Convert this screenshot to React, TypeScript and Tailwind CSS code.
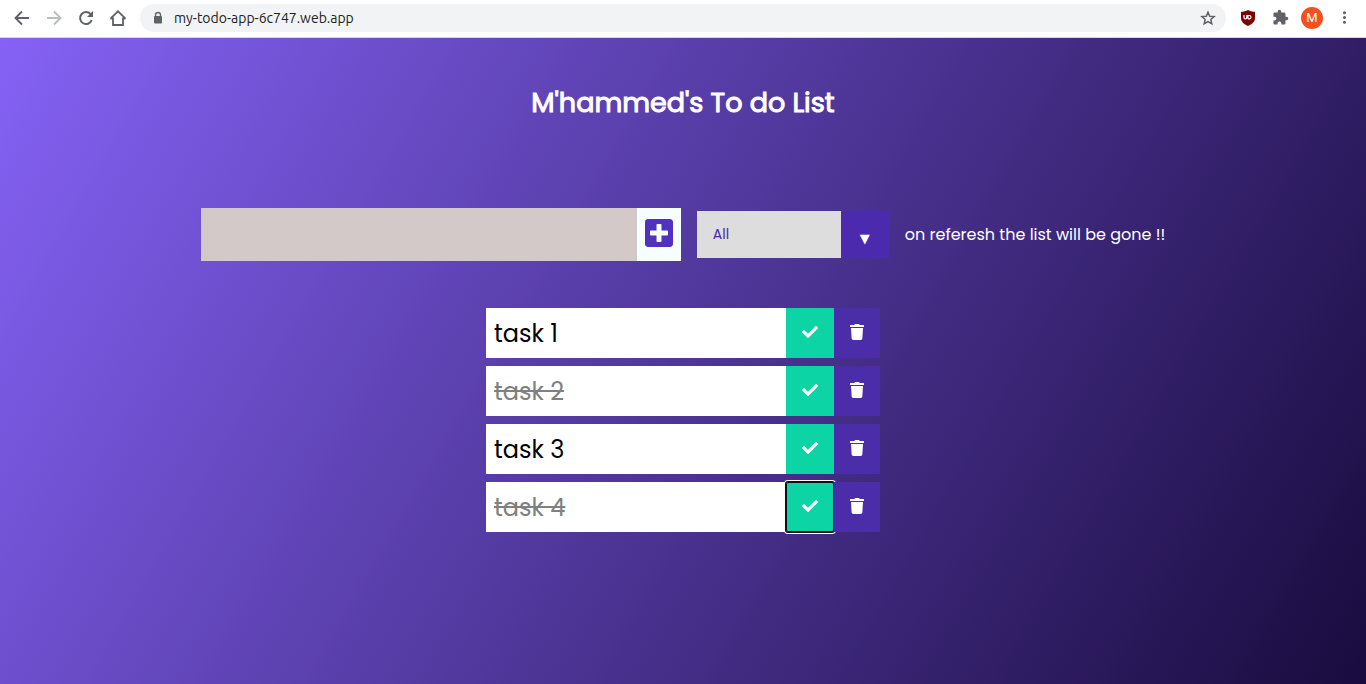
import { useState } from "react";
import type { FormEvent } from "react";
import { FaCheck, FaPlusSquare, FaTrash } from "react-icons/fa";
import { MdMoreVert } from "react-icons/md";

type Task = { id: number; text: string; done: boolean };

const initialTasks: Task[] = [
  { id: 1, text: "task 1", done: false },
  { id: 2, text: "task 2", done: true },
  { id: 3, text: "task 3", done: false },
  { id: 4, text: "task 4", done: true },
];

function ArrowIcon({ forward = false }: { forward?: boolean }) {
  return (
    <svg viewBox="0 0 20 20" className="size-5" fill="none" stroke="currentColor" strokeWidth="1.900" aria-hidden="true">
      <path d={forward ? "M3 10h13M10 3.500l6.500 6.500-6.500 6.500" : "M17 10H4M10 3.500 3.500 10l6.500 6.500"} />
    </svg>
  );
}

function ReloadIcon() {
  return (
    <svg viewBox="0 0 20 20" className="size-5" aria-hidden="true">
      <path d="M15.700 12.200A6 6 0 1 1 14.600 6.100" fill="none" stroke="currentColor" strokeWidth="2" />
      <path d="M17 3v6h-6Z" fill="currentColor" />
    </svg>
  );
}

function HomeIcon() {
  return (
    <svg viewBox="0 0 20 20" className="size-5" fill="none" stroke="currentColor" strokeWidth="1.800" aria-hidden="true">
      <path d="M2.500 10.700 10 3.300l7.500 7.400M2.500 10.500H5V17h10v-6.500h2.500" />
    </svg>
  );
}

function LockIcon() {
  return (
    <svg viewBox="0 0 12 14" className="h-3.5 w-3" aria-hidden="true">
      <path d="M3.500 6V4a2.500 2.500 0 0 1 5 0v2" fill="none" stroke="currentColor" strokeWidth="1.300" />
      <rect x="2" y="5" width="8" height="7.500" rx="1" fill="currentColor" />
    </svg>
  );
}

function StarIcon() {
  return (
    <svg viewBox="0 0 16 16" className="size-4" fill="none" stroke="currentColor" strokeWidth="1.500" aria-hidden="true">
      <path d="m8 2.200 1.700 4 4.400.4-3.300 2.900 1 4.200L8 11.500l-3.800 2.200 1-4.200-3.300-2.900 4.400-.4Z" />
    </svg>
  );
}

function PuzzleIcon() {
  return (
    <svg viewBox="0 0 24 24" className="size-[17px]" fill="currentColor" aria-hidden="true">
      <path d="M20.500 11H19V7c0-1.100-.9-2-2-2h-4V3.500a2.500 2.500 0 0 0-5 0V5H4c-1.100 0-2 .9-2 2v3.800h1.500a2.700 2.700 0 0 1 0 5.400H2V20c0 1.100.9 2 2 2h3.800v-1.500a2.700 2.700 0 0 1 5.400 0V22H17c1.100 0 2-.9 2-2v-4h1.500a2.500 2.500 0 0 0 0-5Z" />
    </svg>
  );
}

function ShieldIcon() {
  return (
    <svg viewBox="0 0 16 16" className="size-4" aria-hidden="true">
      <path d="M8 0c2 1.300 4.500 1.700 7 1.800V8c0 4-3 6.300-7 8-4-1.700-7-4-7-8V1.800C3.500 1.700 6 1.300 8 0Z" fill="#800000" />
      <path d="M4 5v2.400a1.400 1.400 0 0 0 2.800 0V5M8 5v3.900M8 5.500h1.700a1.700 1.700 0 0 1 0 3.300H8" fill="none" stroke="#fff" strokeWidth="1.200" />
    </svg>
  );
}

function BrowserBar() {
  return (
    <header className="flex h-[38px] items-center border-b border-[#d5d7db] bg-white px-3 pb-0.5 text-[#5f6368]">
      <nav className="flex gap-3" aria-label="Browser">
        <button type="button" aria-label="Back">
          <ArrowIcon />
        </button>
        <button type="button" aria-label="Forward" className="text-[#babcbe]">
          <ArrowIcon forward />
        </button>
        <button type="button" aria-label="Reload">
          <ReloadIcon />
        </button>
        <button type="button" aria-label="Home">
          <HomeIcon />
        </button>
      </nav>
      <div className="ml-3 flex h-7 flex-1 items-center rounded-full bg-[#f1f3f4] pr-2.5 pl-3">
        <LockIcon />
        <input
          aria-label="Address"
          defaultValue="my-todo-app-6c747.web.app"
          className="ml-2.5 min-w-0 flex-1 bg-transparent font-[Ubuntu,'Open_Sans',sans-serif] text-sm text-[#202124] outline-none"
        />
        <button type="button" aria-label="Bookmark">
          <StarIcon />
        </button>
      </div>
      <div className="ml-3.5 flex items-center gap-3">
        <button type="button" aria-label="Content blocker" className="mr-1">
          <ShieldIcon />
        </button>
        <button type="button" aria-label="Extensions">
          <PuzzleIcon />
        </button>
        <button
          type="button"
          className="flex size-[22px] items-center justify-center rounded-full bg-[#f4511e] font-[Roboto,sans-serif] text-[13px] text-white"
        >
          M
        </button>
        <button type="button" aria-label="Menu">
          <MdMoreVert size={19} />
        </button>
      </div>
    </header>
  );
}

export default function App() {
  const [tasks, setTasks] = useState<Task[]>(initialTasks);
  const [text, setText] = useState("");
  const [filter, setFilter] = useState("all");
  const [activeId, setActiveId] = useState(4);

  const visible = tasks.filter(
    (t) => filter === "all" || (filter === "completed" ? t.done : !t.done),
  );

  function addTask(e: FormEvent) {
    e.preventDefault();
    if (!text.trim()) return;
    setTasks([...tasks, { id: Date.now(), text, done: false }]);
    setText("");
  }

  function toggle(id: number) {
    setActiveId(id);
    setTasks(tasks.map((t) => (t.id === id ? { ...t, done: !t.done } : t)));
  }

  return (
    <div className="flex min-h-screen flex-col">
      <BrowserBar />
      <main className="flex-1 bg-[linear-gradient(120deg,#8562f5,#190b3e)] font-[Poppins,Inter,sans-serif] text-white">
        <h1 className="pt-11 text-center text-[27px] leading-[42px] font-normal [-webkit-text-stroke:1px_#ffffff]">
          M'hammed's To do List
        </h1>
        <form onSubmit={addTask} className="mt-[84px] flex flex-wrap items-center justify-center gap-4">
          <div className="flex h-[53px]">
            <input
              aria-label="New task"
              value={text}
              onChange={(e) => setText(e.target.value)}
              className="w-[436px] bg-[#d3c9c9] px-2 text-2xl text-black outline-none"
            />
            <button
              type="submit"
              aria-label="Add task"
              className="flex w-11 items-center justify-center bg-[#f7fffe] pb-1 text-[#5331bf]"
            >
              <FaPlusSquare size={32} />
            </button>
          </div>
          <div className="relative flex h-[47px]">
            <select
              aria-label="Filter tasks"
              value={filter}
              onChange={(e) => setFilter(e.target.value)}
              className="w-48 appearance-none bg-[#dddddd] px-4 pb-0.5 text-sm text-[#4b2aad] outline-none"
            >
              <option value="all">All</option>
              <option value="completed">Completed</option>
              <option value="uncompleted">Uncompleted</option>
            </select>
            <span className="pointer-events-none absolute inset-y-0 right-0 flex w-12 items-center justify-center bg-[#4b2aad] pt-2 font-['DejaVu_Sans',sans-serif] text-[13px]">
              ▼
            </span>
          </div>
          <p className="text-base">on referesh the list will be gone !!</p>
        </form>
        <ul className="mt-[47px] flex flex-col items-center gap-2">
          {visible.map((task) => (
            <li key={task.id} className="flex h-[50px]">
              <span
                className={
                  task.done
                    ? "flex w-[300px] items-center bg-white px-2 pt-0.5 text-2xl text-[#808080]"
                    : "flex w-[300px] items-center bg-white px-2 pt-0.5 text-2xl text-black"
                }
              >
                <span className={task.done ? "line-through" : ""}>{task.text}</span>
              </span>
              <button
                type="button"
                aria-label={`Complete ${task.text}`}
                onClick={() => toggle(task.id)}
                className={
                  task.id === activeId
                    ? "flex w-12 items-center justify-center rounded-[2px] bg-[#0dd4a4] pb-0.5 shadow-[inset_0_0_0_1px_#101010,0_0_0_1px_#101010,0_0_0_2px_#ffffff] outline-none"
                    : "flex w-12 items-center justify-center bg-[#0dd4a4] pb-0.5 outline-none"
                }
              >
                <FaCheck size={16} />
              </button>
              <button
                type="button"
                aria-label={`Delete ${task.text}`}
                onClick={() => setTasks(tasks.filter((t) => t.id !== task.id))}
                className="flex w-[46px] items-center justify-center bg-[#4b2ca9] pb-0.5"
              >
                <FaTrash size={16} />
              </button>
            </li>
          ))}
        </ul>
      </main>
    </div>
  );
}
